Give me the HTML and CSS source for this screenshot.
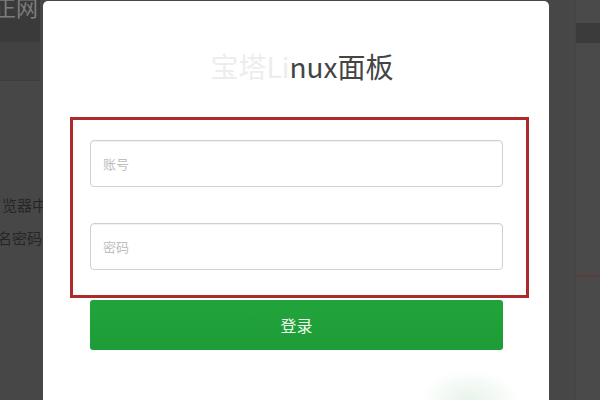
FILE: index.html
```html
<!DOCTYPE html>
<html lang="zh">
<head>
<meta charset="utf-8">
<title>登录</title>
<link rel="stylesheet" href="styles.css">
</head>
<body>
<div class="screen">
  <div class="side side-left">
    <div class="topbar"><span class="brand">正网</span></div>
    <div class="subbar"></div>
    <div class="bg-text line1">览器中</div>
    <div class="bg-text line2">名密码</div>
  </div>
  <div class="modal">
    <h1 class="title"><span class="faded">宝塔Li</span>nux面板</h1>
    <div class="highlight">
      <input class="field" type="text" placeholder="账号">
      <input class="field field-2" type="password" placeholder="密码">
    </div>
    <button class="btn">登录</button>
    <div class="glow"></div>
  </div>
  <div class="side side-right">
    <div class="rail">
      <div class="rail-box"></div>
      <div class="rail-line"></div>
    </div>
  </div>
</div>
</body>
</html>
```

FILE: styles.css
```css
html, body {
  margin: 0;
  padding: 0;
  background: #474747;
  font-family: "Noto Sans CJK SC", "Noto Sans", sans-serif;
}

.screen {
  display: flex;
  width: 600px;
  height: 400px;
  overflow: hidden;
}

.side {
  display: flex;
  flex-direction: column;
  flex: none;
}

.side-left {
  width: 43px;
  overflow: hidden;
}

.topbar {
  height: 42px;
  width: 40px;
  background: #3a3a3a;
  overflow: hidden;
}

.brand {
  display: block;
  margin-left: -6px;
  margin-top: -9px;
  font-size: 22px;
  line-height: 30px;
  color: #7c7c7c;
  white-space: nowrap;
}

.subbar {
  height: 38px;
  width: 40px;
  background: #424242;
  border-bottom: 1px solid #3e3e3e;
}

.bg-text {
  white-space: nowrap;
  font-size: 15px;
  line-height: 20px;
  color: #262626;
}

.line1 {
  margin-top: 114px;
  margin-left: 2px;
}

.line2 {
  margin-top: 13px;
  margin-left: -3px;
}

.modal {
  flex: none;
  width: 506px;
  height: 420px;
  margin-top: 1px;
  background: #fff;
  border-radius: 5px 5px 0 0;
  box-sizing: border-box;
  padding-top: 45px;
}

.title {
  margin: 0;
  padding-left: 12px;
  height: 40px;
  line-height: 40px;
  text-align: center;
  font-size: 28px;
  font-weight: normal;
  color: #444;
}

.faded {
  color: #ededed;
}

.highlight {
  display: flex;
  flex-direction: column;
  margin-top: 31px;
  margin-left: 27px;
  width: 459px;
  box-sizing: border-box;
  border: 3px solid #ac2a2a;
  padding: 20px 23px 25px 17px;
}

.field {
  display: block;
  width: 413px;
  height: 47px;
  box-sizing: border-box;
  margin: 0;
  padding: 0 12px;
  border: 1px solid #d0d0d0;
  border-radius: 4px;
  box-shadow: inset 0 1px 1px rgba(0, 0, 0, 0.06);
  font-family: "Noto Sans CJK SC", "Noto Sans", sans-serif;
  font-size: 13px;
  color: #555;
  background: #fff;
  outline: none;
}

.field::placeholder {
  color: #bdbdbd;
}

.field-2 {
  margin-top: 36px;
}

.btn {
  display: block;
  margin-top: 2px;
  margin-left: 47px;
  width: 413px;
  height: 50px;
  border: none;
  border-radius: 3px;
  background: linear-gradient(#22a43c, #1e9c37);
  color: #eef8ee;
  font-family: "Noto Sans CJK SC", "Noto Sans", sans-serif;
  font-size: 16px;
  padding: 0;
}

.glow {
  margin-top: 16px;
  margin-left: 372px;
  width: 110px;
  height: 50px;
  background: radial-gradient(ellipse at 50% 75%, rgba(40, 150, 60, 0.12), rgba(40, 150, 60, 0) 65%);
}

.side-right {
  width: 51px;
  background: #474747;
}

.rail {
  margin-left: 26px;
  flex: 1;
  background: #4a4a4a;
  border-left: 1px solid #444;
}

.rail-box {
  margin-top: 23px;
  height: 20px;
  background: #3b3b3b;
}

.rail-line {
  margin-top: 232px;
  height: 2px;
  background: #5a3d3d;
}
```
